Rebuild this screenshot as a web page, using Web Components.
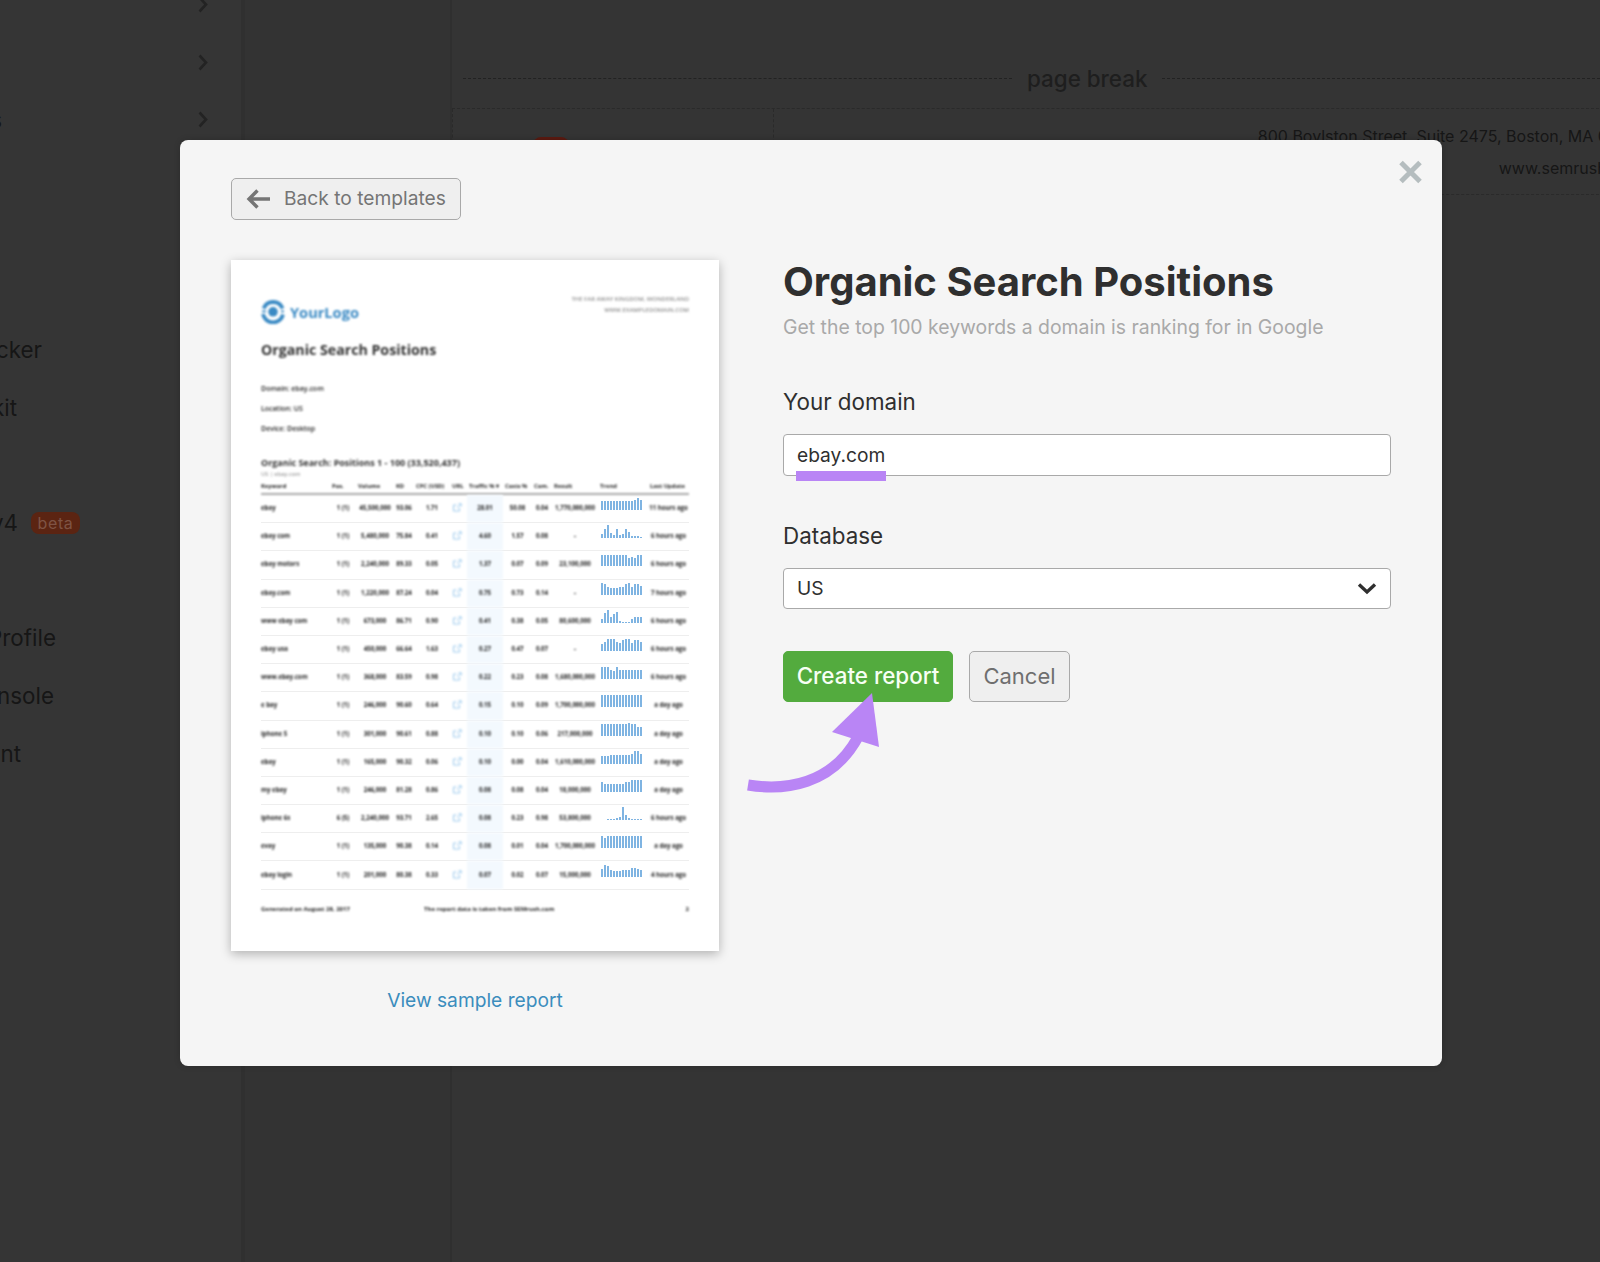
<!DOCTYPE html>
<html lang="en">
<head>
<meta charset="utf-8">
<title>Organic Search Positions</title>
<style>
  html, body { margin: 0; height: 1262px; overflow: hidden; background: #333; }
</style>
</head>
<body>
<app-page>
  <side-nav slot="side">
    <nav-item chevron></nav-item>
    <nav-item chevron></nav-item>
    <nav-item chevron end="2">s</nav-item>
    <nav-item></nav-item>
    <nav-item></nav-item>
    <nav-item></nav-item>
    <nav-item end="42">cker</nav-item>
    <nav-item end="17">kit</nav-item>
    <nav-item></nav-item>
    <nav-item end="18">v4<beta-tag slot="tag">beta</beta-tag></nav-item>
    <nav-item></nav-item>
    <nav-item end="56">Profile</nav-item>
    <nav-item end="54">nsole</nav-item>
    <nav-item end="21">nt</nav-item>
  </side-nav>
  <report-canvas slot="main"></report-canvas>
  <report-modal slot="modal"></report-modal>
</app-page>

<script>
function define(name, css, html) {
  customElements.define(name, class extends HTMLElement {
    connectedCallback() {
      if (this.shadowRoot) return;
      this.attachShadow({ mode: 'open' });
      this.shadowRoot.innerHTML = `<style>${css}</style>` + (typeof html === 'function' ? html(this) : html);
    }
  });
}

const INTER = `Inter, "Liberation Sans", sans-serif`;
const OPEN = `"Open Sans", "Liberation Sans", sans-serif`;

define('app-page', `
  :host { display: flex; position: relative; width: 1600px; height: 1262px; overflow: hidden; background: #333; font-family: ${INTER}; }
  .col { width: 205px; flex: none; border-right: 2px solid #2f2f2f; background: #333; }
  .main { flex: 1; min-width: 0; background: #343434; }
`, `
  <slot name="side"></slot>
  <div class="col"></div>
  <div class="main"><slot name="main"></slot></div>
  <slot name="modal"></slot>
`);

define('side-nav', `
  :host { display: block; width: 241px; flex: none; height: 1262px; overflow: hidden; background: #353535; border-right: 4px solid #303030; box-sizing: content-box; }
  .list { margin-top: -24px; }
`, `<div class="list"><slot></slot></div>`);

define('nav-item', `
  :host { display: flex; align-items: center; height: 57.6px; font-size: 22.4px; color: #161616; }
  .text { display: flex; justify-content: flex-end; overflow: hidden; white-space: nowrap; flex: none; padding-bottom: 1px; }
  svg { margin-left: auto; margin-right: 33px; }
`, el => `
  <span class="text" style="width:${el.getAttribute('end') || 0}px"><slot></slot></span>
  <slot name="tag"></slot>
  ${el.hasAttribute('chevron') ? `<svg width="10" height="17" viewBox="0 0 10 17"><path d="M1.5 1.5 8 8.5 1.5 15.5" fill="none" stroke="#232323" stroke-width="2.6"/></svg>` : ''}
`);

define('beta-tag', `
  :host { display: block; margin-left: 13px; width: 49px; height: 22px; line-height: 22px; border-radius: 8px; background: #5b2412; color: #7f5344; font-size: 16px; letter-spacing: .6px; text-align: center; }
`, `<slot></slot>`);

define('report-canvas', `
  :host { display: block; width: 1148px; overflow: hidden; }
  .break { display: flex; align-items: center; gap: 15px; margin: 64px 0 16px 11px; height: 28px; }
  .break i { display: block; border-top: 1px dashed #222; }
  .break i:first-child { width: 549px; flex: none; }
  .break i:last-child { flex: 1; }
  .break span { font-size: 22.4px; font-weight: 500; color: #1e1e1e; white-space: nowrap; }
  .head { display: grid; grid-template-columns: 322px 870px; width: 1192px; height: 87px; box-sizing: border-box; border-top: 1px dashed #2a2a2a; border-bottom: 1px dashed #2a2a2a; }
  .left { border-left: 1px dashed #2a2a2a; border-right: 1px dashed #2a2a2a; }
  .mark { width: 36px; height: 20px; margin: 28px 0 0 80px; border-radius: 8px; background: #5b1a10; }
  .addr { padding-top: 11px; text-align: right; font-size: 16px; line-height: 32px; color: #161616; }
`, `
  <div class="break"><i></i><span>page break</span><i></i></div>
  <div class="head">
    <div class="left"><div class="mark"></div></div>
    <div class="addr">800 Boylston Street, Suite 2475, Boston, MA 02199<br>www.semrush.com</div>
  </div>
`);

define('report-modal', `
  :host { position: absolute; left: 180px; top: 140px; width: 1262px; height: 926px; box-sizing: border-box; padding: 38px 51px; background: #f5f5f5; border-radius: 8px; box-shadow: 0 0 6px rgba(0,0,0,.18); color: #2f2f2f; }
  .close { position: absolute; left: 1217.5px; top: 20px; }
  .arrow { position: absolute; left: 560px; top: 545px; }
  .cols { display: grid; grid-template-columns: 488px 608px; column-gap: 64px; margin-top: 40px; }
  .link { display: block; margin-top: 36px; text-align: center; font-size: 19.2px; line-height: 26px; color: #3b8dbd; text-decoration: none; }
  h1 { margin: -2px 0 0; font-size: 40px; line-height: 48px; font-weight: 700; white-space: nowrap; }
  p { margin: 7px 0 0; font-size: 19.4px; line-height: 28px; color: #a9a9a9; white-space: nowrap; }
  .first { margin-top: 46px; }
  .next { margin-top: 45px; }
  .actions { display: flex; gap: 16px; margin-top: 42px; }
`, `
  <svg class="close" width="25" height="24" viewBox="0 0 25 24"><path d="M3 2.5 22 21.5M22 2.5 3 21.5" stroke="#b5bdbf" stroke-width="5" fill="none"/></svg>
  <ui-button kind="back">Back to templates</ui-button>
  <div class="cols">
    <div>
      <report-preview></report-preview>
      <a class="link" href="#">View sample report</a>
    </div>
    <div>
      <h1>Organic Search Positions</h1>
      <p>Get the top 100 keywords a domain is ranking for in Google</p>
      <form-field class="first" label="Your domain" underline>ebay.com</form-field>
      <form-field class="next" label="Database" select>US</form-field>
      <div class="actions">
        <ui-button kind="primary">Create report</ui-button>
        <ui-button kind="cancel">Cancel</ui-button>
      </div>
    </div>
  </div>
  <svg class="arrow" width="150" height="115" viewBox="0 0 150 115">
    <path d="M8 100C45 106 92 100 118 52" fill="none" stroke="#b985f5" stroke-width="11"/>
    <path d="M132 8 92 47 139 62Z" fill="#b985f5"/>
  </svg>
`);

define('ui-button', `
  :host { display: inline-flex; align-items: center; justify-content: center; box-sizing: border-box; height: 51px; padding-bottom: 2px; border: 1px solid #a9a9a9; border-radius: 5px; background: #efefef; color: #6f6f6f; font-size: 22px; white-space: nowrap; }
  :host([kind=cancel]) { width: 101px; }
  :host([kind=primary]) { width: 170px; background: #53ab3e; border-color: #53ab3e; color: #f7fff4; font-size: 22.4px; font-weight: 500; }
  :host([kind=back]) { width: 230px; height: 42px; padding: 0 0 2px 14px; justify-content: flex-start; gap: 13px; font-size: 19.2px; color: #757575; }
  svg { margin-top: 2px; }
`, el => `
  ${el.getAttribute('kind') === 'back' ? `<svg width="25" height="20" viewBox="0 0 25 20"><path d="M24 10H3M11.5 1.5 3 10l8.5 8.5" fill="none" stroke="#757575" stroke-width="3.4"/></svg>` : ''}
  <slot></slot>
`);

define('form-field', `
  :host { display: block; }
  label { display: block; font-size: 22.4px; line-height: 30px; color: #2f2f2f; }
  .box { position: relative; display: flex; align-items: center; justify-content: space-between; box-sizing: border-box; height: 42px; margin-top: 17px; padding: 0 13px 0 13px; background: #fff; border: 1px solid #a9a9a9; border-radius: 4px; font-size: 19.2px; color: #2f2f2f; }
  :host([select]) .box { height: 41px; padding-bottom: 1px; }
  .mark { position: absolute; left: 12px; top: 36px; width: 90px; height: 10px; background: #b985f5; }
`, el => `
  <label>${el.getAttribute('label')}</label>
  <div class="box">
    <span><slot></slot></span>
    ${el.hasAttribute('select') ? `<svg width="20" height="13" viewBox="0 0 20 13"><path d="M2 2.5 10 10 18 2.5" fill="none" stroke="#2f2f2f" stroke-width="3.4"/></svg>` : ''}
    ${el.hasAttribute('underline') ? `<div class="mark"></div>` : ''}
  </div>
`);

define('spark-bars', `
  :host { display: block; margin: 0 2px 9px 0; }
  svg { display: block; }
`, el => {
  const bars = el.getAttribute('bars').split(',').map(Number);
  return `<svg width="43" height="14" viewBox="0 0 43 14">${bars.map((h, i) =>
    `<rect x="${i * 3}" y="${14 - h}" width="2" height="${h}" fill="#7fb4e2"/>`).join('')}</svg>`;
});

const COLS = '69px 26px 38px 20px 36px 17px 36px 29px 20px 46px 50px 41px';
const HEADS = ['Keyword', 'Pos.', 'Volume', 'KD', 'CPC (USD)', 'URL', 'Traffic % \u25BE', 'Costs %', 'Com.', 'Result', 'Trend', 'Last Update'];
const ROWS = [
  ['ebay', '1 (1)', '45,500,000', '93.06', '1.71', '28.01', '50.08', '0.04', '1,770,000,000', '9,9,9,9,9,9,9,9,9,9,9,10,12,10', '11 hours ago'],
  ['ebay com', '1 (1)', '5,480,000', '75.84', '0.41', '4.60', '1.57', '0.08', '-', '4,9,13,5,3,9,3,4,9,6,2,2,2,1', '6 hours ago'],
  ['ebay motors', '1 (1)', '2,240,000', '89.33', '0.05', '1.37', '0.07', '0.09', '23,100,000', '11,11,11,11,11,11,11,11,11,8,9,8,11,11', '6 hours ago'],
  ['ebay.com', '1 (1)', '1,220,000', '87.24', '0.04', '0.75', '0.73', '0.14', '-', '12,11,8,7,7,7,8,8,11,12,8,11,11,9', '7 hours ago'],
  ['www ebay com', '1 (1)', '673,000', '86.71', '0.90', '0.41', '0.38', '0.05', '80,600,000', '4,10,13,6,9,11,2,1,1,1,4,6,6,6', '6 hours ago'],
  ['ebay usa', '1 (1)', '450,000', '66.64', '1.63', '0.27', '0.47', '0.07', '-', '7,9,12,12,12,9,8,11,12,12,8,11,11,9', '6 hours ago'],
  ['www.ebay.com', '1 (1)', '368,000', '83.59', '0.98', '0.22', '0.23', '0.08', '1,680,000,000', '12,12,12,9,8,12,9,9,9,9,9,9,9,9', '6 hours ago'],
  ['e bay', '1 (1)', '246,000', '90.60', '0.64', '0.15', '0.10', '0.09', '1,700,000,000', '12,12,12,12,12,12,12,12,12,12,12,12,12,12', 'a day ago'],
  ['iphone 5', '1 (1)', '301,000', '90.61', '0.88', '0.10', '0.10', '0.06', '217,000,000', '12,12,12,12,12,12,12,12,12,13,12,12,9,9', 'a day ago'],
  ['ebay', '1 (1)', '165,000', '90.32', '0.06', '0.10', '0.00', '0.04', '1,610,000,000', '8,8,8,9,9,9,9,9,9,9,10,13,13,10', 'a day ago'],
  ['my ebay', '1 (1)', '246,000', '81.28', '0.86', '0.08', '0.08', '0.04', '18,000,000', '10,8,8,8,8,8,8,8,10,10,12,12,12,12', 'a day ago'],
  ['iphone 6s', '6 (5)', '2,240,000', '93.71', '2.65', '0.08', '0.23', '0.98', '53,800,000', '0,0,1,1,1,2,3,13,5,2,1,1,1,1', '6 hours ago'],
  ['evay', '1 (1)', '135,000', '90.38', '0.14', '0.08', '0.01', '0.04', '1,700,000,000', '12,10,12,12,12,12,12,12,12,12,12,12,12,12', 'a day ago'],
  ['ebay login', '1 (1)', '201,000', '80.38', '0.33', '0.07', '0.02', '0.07', '15,000,000', '8,12,11,7,6,6,6,7,7,7,9,9,8,7', '4 hours ago'],
];

define('report-preview', `
  :host { display: block; height: 691px; background: #fff; box-shadow: 0 3px 10px rgba(0,0,0,.28); color: #222; font-family: ${OPEN}; }
  .doc { box-sizing: border-box; height: 691px; padding: 40px 30px 0; }
  .top, h2, .meta, h3, .sub, .hd, .foot, .bd > span:not(.trend) { filter: blur(.8px); }
  .top { display: flex; justify-content: space-between; height: 24px; }
  .logo { display: flex; align-items: center; gap: 5px; color: #3a8ac4; font-size: 14.6px; font-weight: 700; }
  .addr { margin-top: -6px; text-align: right; font-size: 5.9px; line-height: 11px; color: #8f8f8f; font-weight: 600; }
  h2 { margin: 16px 0 0; font-size: 14.2px; line-height: 20px; font-weight: 700; color: #333; }
  .meta { margin: 19px 0 -1px; font-size: 7px; line-height: 20px; font-weight: 600; }
  h3 { margin: 19px 0 0; font-size: 9px; line-height: 12px; font-weight: 700; color: #333; }
  .sub { margin-top: 1px; font-size: 5.6px; line-height: 8px; color: #999; font-weight: 600; }
  .row { display: grid; grid-template-columns: ${COLS}; font-size: 6.1px; font-weight: 700; white-space: nowrap; }
  .row > * { display: flex; align-items: center; justify-content: center; }
  .row > :first-child { justify-content: flex-start; }
  .hd { margin-top: 3px; height: 12px; border-bottom: 2px solid #a9a9a9; font-size: 5.8px; }
  .hd > * { height: 10px; justify-content: flex-start; padding-left: 2px; }
  .hd > :first-child { padding-left: 0; }
  .bd { height: 28.2px; box-sizing: border-box; border-bottom: 1px solid #eeeeee; padding-bottom: 2px; }
  .tf { background: #f3f9fe; margin-bottom: -2px; padding-bottom: 2px; }
  .url { padding-right: 2px; }
  .foot { display: grid; grid-template-columns: 163px 1fr auto; margin-top: 14.4px; font-size: 6px; line-height: 10px; font-weight: 700; }
`, () => `
  <div class="doc">
    <div class="top">
      <div class="logo">
        <svg width="24" height="24" viewBox="0 0 24 24" fill="none">
          <path d="M2.6 8.5A10.2 10.2 0 0 1 21.6 8.5" stroke="#3a8ac4" stroke-width="3.8"/>
          <path d="M2 14A10.2 10.2 0 0 0 22 14.5" stroke="#3a8ac4" stroke-width="3.8"/>
          <path d="M1 11.4h4M23 11.4h-3" stroke="#3a8ac4" stroke-width="1.6"/>
          <circle cx="12" cy="11.8" r="4.8" fill="#3a8ac4"/>
        </svg>
        <span>YourLogo</span>
      </div>
      <div class="addr">THE FAR AWAY KINGDOM, WONDERLAND<br>WWW.EXAMPLEDOMAIN.COM</div>
    </div>
    <h2>Organic Search Positions</h2>
    <div class="meta">Domain: ebay.com<br>Location: US<br>Device: Desktop</div>
    <h3>Organic Search: Positions 1 - 100 (33,520,437)</h3>
    <div class="sub">US | ebay.com</div>
    <div class="row hd">${HEADS.map(h => `<span>${h}</span>`).join('')}</div>
    ${ROWS.map(r => `
      <div class="row bd">
        <span>${r[0]}</span><span>${r[1]}</span><span>${r[2]}</span><span>${r[3]}</span><span>${r[4]}</span>
        <span class="url"><svg width="9" height="9" viewBox="0 0 9 9" fill="none" stroke="#9ccaed" stroke-width="1"><path d="M6.5 5v3h-6V2h3M4 5l4-4M5.5 .8H8.2V3.5"/></svg></span>
        <span class="tf">${r[5]}</span><span>${r[6]}</span><span>${r[7]}</span><span>${r[8]}</span>
        <span class="trend"><spark-bars bars="${r[9]}"></spark-bars></span>
        <span>${r[10]}</span>
      </div>`).join('')}
    <div class="foot"><span>Generated on August 28, 2017</span><span>The report data is taken from SEMrush.com</span><span>2</span></div>
  </div>
`);
</script>
</body>
</html>
